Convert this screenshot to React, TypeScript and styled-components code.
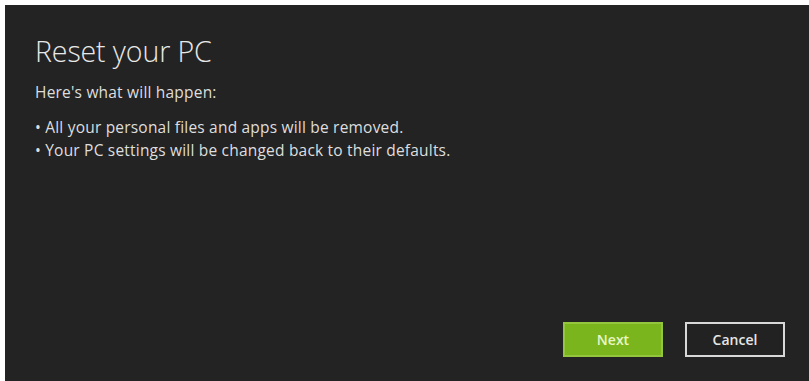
import React from "react";
import styled, { createGlobalStyle } from "styled-components";

const Global = createGlobalStyle`
  html, body {
    margin: 0;
    padding: 0;
    background: #ffffff;
  }
  #root {
    width: 809px;
    height: 381px;
    padding: 5px 0 0 5px;
    box-sizing: border-box;
  }
`;

const Panel = styled.div`
  height: 100%;
  background: #232323;
  color: #e4e4e4;
  font-family: "Open Sans", "Liberation Sans", sans-serif;
  padding: 27px 24px 24px 30px;
  box-sizing: border-box;
  display: flex;
  flex-direction: column;
`;

const Title = styled.h1`
  margin: 0;
  font-size: 28.5px;
  font-weight: 300;
  line-height: 38px;
  letter-spacing: -0.1px;
  color: #e8e8e8;
`;

const Lead = styled.p`
  margin: 12px 0 0;
  font-size: 15.5px;
  line-height: 20px;
  letter-spacing: 0.2px;
  color: #dedede;
`;

const List = styled.ul`
  list-style: none;
  margin: 14px 0 0;
  padding: 0;
  li {
    font-size: 15.5px;
    line-height: 22.5px;
    letter-spacing: 0.2px;
    color: #dedede;
  }
`;

const Actions = styled.div`
  margin-top: auto;
  display: flex;
  justify-content: flex-end;
  gap: 22px;
`;

const Button = styled.button<{ $primary?: boolean }>`
  width: 100px;
  height: 35px;
  box-sizing: border-box;
  font-family: "Open Sans", "Liberation Sans", sans-serif;
  font-size: 14px;
  font-weight: 600;
  color: ${(p) => (p.$primary ? "#e8f5c8" : "#e6e6e6")};
  background: ${(p) => (p.$primary ? "#7ab51d" : "#222222")};
  border: 2px solid ${(p) => (p.$primary ? "#93c63c" : "#d8d8d8")};
  cursor: pointer;
`;

export default function App() {
  return (
    <>
      <Global />
      <Panel>
        <Title>Reset your PC</Title>
        <Lead>Here's what will happen:</Lead>
        <List>
          <li>• All your personal files and apps will be removed.</li>
          <li>• Your PC settings will be changed back to their defaults.</li>
        </List>
        <Actions>
          <Button $primary>Next</Button>
          <Button>Cancel</Button>
        </Actions>
      </Panel>
    </>
  );
}
